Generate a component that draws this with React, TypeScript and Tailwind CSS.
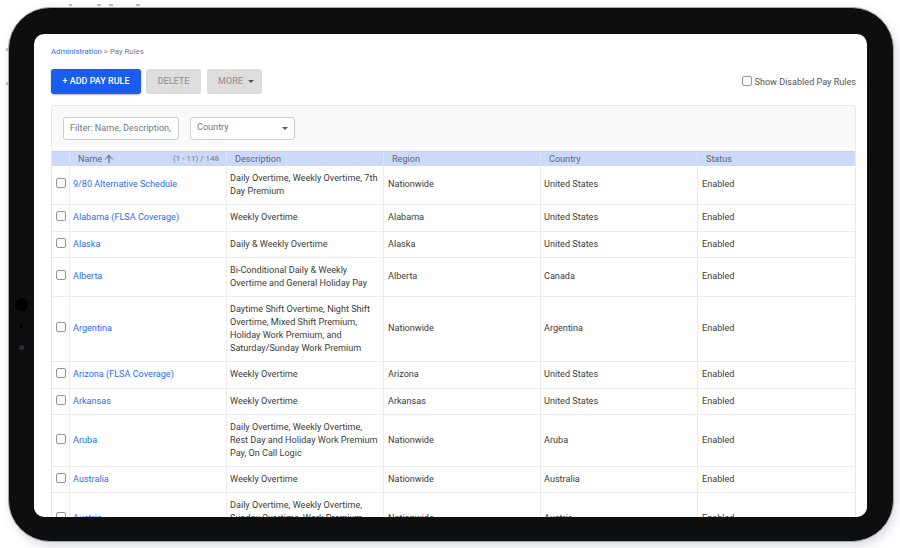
import { ArrowUp } from "lucide-react";

const rows = [
    { name: "9/80 Alternative Schedule", desc: ["Daily Overtime, Weekly Overtime, 7th", "Day Premium"], region: "Nationwide", country: "United States", h: "h-[39px]" },
    { name: "Alabama (FLSA Coverage)", desc: ["Weekly Overtime"], region: "Alabama", country: "United States", h: "h-[27px]" },
    { name: "Alaska", desc: ["Daily & Weekly Overtime"], region: "Alaska", country: "United States", h: "h-[26px]" },
    { name: "Alberta", desc: ["Bi-Conditional Daily & Weekly", "Overtime and General Holiday Pay"], region: "Alberta", country: "Canada", h: "h-[39px]" },
    { name: "Argentina", desc: ["Daytime Shift Overtime, Night Shift", "Overtime, Mixed Shift Premium,", "Holiday Work Premium, and", "Saturday/Sunday Work Premium"], region: "Nationwide", country: "Argentina", h: "h-[65px]" },
    { name: "Arizona (FLSA Coverage)", desc: ["Weekly Overtime"], region: "Arizona", country: "United States", h: "h-[27px]" },
    { name: "Arkansas", desc: ["Weekly Overtime"], region: "Arkansas", country: "United States", h: "h-[26px]" },
    { name: "Aruba", desc: ["Daily Overtime, Weekly Overtime,", "Rest Day and Holiday Work Premium", "Pay, On Call Logic"], region: "Nationwide", country: "Aruba", h: "h-[52px]" },
    { name: "Australia", desc: ["Weekly Overtime"], region: "Nationwide", country: "Australia", h: "h-[26px]" },
    { name: "Austria", desc: ["Daily Overtime, Weekly Overtime,", "Sunday Overtime, Work Premium,", "\u00a0"], region: "Nationwide", country: "Austria", h: "h-[52px]" },
];

const cols = "grid grid-cols-[18px_157px_157px_157px_157px_1fr]";

function Box({ className = "" }: { className?: string }) {
    return <span className={`block w-[10px] h-[10px] rounded-[2px] border border-[#949494] bg-white ${className}`} />;
}

function Caret() {
    return <span className="block w-0 h-0 border-x-[3.5px] border-x-transparent border-t-[3.5px] border-t-[#555]" />;
}

export default function App() {
    return (
        <div className="w-[900px] h-[548px] bg-white pt-[7px] pl-[8px] overflow-hidden font-['Roboto',sans-serif]">
            {/* Tablet frame */}
            <div className="relative w-[886px] h-[535px] rounded-[42px] bg-[#0e0e0e] border border-[#a8a8a8] shadow-[2px_4px_10px_rgba(120,140,160,0.3)] pl-[25px] pt-[26px]">
                {/* Hardware buttons */}
                <span className="absolute left-[60px] top-[-4px] w-[3px] h-[2px] bg-[#bbb]" />
                <span className="absolute left-[88px] top-[-4px] w-[4px] h-[2px] bg-[#bbb]" />
                <span className="absolute left-[100px] top-[-4px] w-[4px] h-[2px] bg-[#bbb]" />
                <span className="absolute left-[127px] top-[-4px] w-[4px] h-[2px] bg-[#bbb]" />
                <span className="absolute left-[-3px] top-[40px] w-[2px] h-[3px] bg-[#bbb]" />
                <span className="absolute left-[-3px] top-[74px] w-[2px] h-[3px] bg-[#bbb]" />

                {/* Camera and sensors */}
                <span className="absolute left-[6px] top-[290px] w-[13px] h-[13px] rounded-full bg-[#000]" />
                <span className="absolute left-[10px] top-[317px] w-[4px] h-[4px] rounded-full bg-[#000]" />
                <span className="absolute left-[10px] top-[337px] w-[5px] h-[5px] rounded-full bg-[#25303a]" />

                {/* Screen */}
                <div className="w-[833px] h-[483px] rounded-[10px] bg-white overflow-hidden pl-[17px] pr-[11px] pt-[13px]">
                    <div className="text-[7.8px] leading-[10px] text-[#777]">
                        <span className="text-[#2f6bf0]">Administration</span> &gt; Pay Rules
                    </div>

                    <div className="flex items-start mt-[12px] h-[25px]">
                        <button className="w-[90px] h-[25px] rounded-[3px] bg-[#1a5cf0] text-white text-[9px] font-medium shadow-[0_1px_2px_rgba(0,0,0,0.3)]">+ ADD PAY RULE</button>
                        <button className="ml-[5px] w-[55px] h-[25px] rounded-[3px] bg-[#dddddd] text-[#9a9a9a] text-[9px] font-medium">DELETE</button>
                        <button className="ml-[6px] w-[55px] h-[25px] rounded-[3px] bg-[#dddddd] text-[#9a9a9a] text-[9px] font-medium flex items-center justify-center gap-[5px] pl-[3px]">
                            MORE <Caret />
                        </button>
                        <label className="ml-auto flex items-center gap-[3px] text-[9.1px] text-[#555] mt-[7px]">
                            <Box className="mb-[3px]" />
                            Show Disabled Pay Rules
                        </label>
                    </div>

                    {/* Table card */}
                    <div className="mt-[11px] w-[805px] rounded-t-[3px] border border-[#e8e8e8] border-b-0 bg-[#f9f9f9]">
                        <div className="h-[45px] flex items-center pl-[11px] gap-[11px]">
                            <div className="w-[116px] h-[23px] rounded-[3px] border border-[#cfcfcf] bg-white px-[6px] text-[9.1px] leading-[20px] text-[#777] whitespace-nowrap overflow-hidden">
                                Filter: Name, Description,
                            </div>
                            <div className="w-[105px] h-[23px] rounded-[3px] border border-[#cfcfcf] bg-white px-[6px] pb-[1px] text-[9.1px] text-[#777] flex items-center justify-between">
                                Country
                                <Caret />
                            </div>
                        </div>

                        <div className={`${cols} h-[15px] bg-[#cbdafb] border-t border-[#c0d0f0] text-[9.1px] leading-[14px] text-[#5f6672]`}>
                            <div className="border-r border-[#dbe5fb]" />
                            <div className="border-r border-[#dbe5fb] pl-[8px] pr-[7px] flex items-center">
                                Name
                                <ArrowUp className="w-[12px] h-[12px] ml-[1px] text-[#555]" strokeWidth={2} />
                                <span className="ml-auto text-[8px] text-[#777]">(1 - 11) / 148</span>
                            </div>
                            <div className="border-r border-[#dbe5fb] pl-[8px]">Description</div>
                            <div className="border-r border-[#dbe5fb] pl-[8px]">Region</div>
                            <div className="border-r border-[#dbe5fb] pl-[8px]">Country</div>
                            <div className="pl-[8px]">Status</div>
                        </div>

                        <div className="bg-white text-[9.1px] leading-[13px] text-[#3c3c3c]">
                            {rows.map((r) => (
                                <div key={r.name} className={`${cols} ${r.h} border-b border-[#ececec]`}>
                                    <div className="border-r border-[#ececec] flex items-center justify-center pb-[4px]">
                                        <Box />
                                    </div>
                                    <div className="border-r border-[#ececec] pl-[3px] pb-[1px] flex items-center text-[#2f6bf0] whitespace-nowrap">{r.name}</div>
                                    <div className="border-r border-[#ececec] pl-[3px] pb-[1px] flex flex-col justify-center whitespace-nowrap">
                                        {r.desc.map((d) => (
                                            <span key={d}>{d}</span>
                                        ))}
                                    </div>
                                    <div className="border-r border-[#ececec] pl-[4px] pb-[1px] flex items-center">{r.region}</div>
                                    <div className="border-r border-[#ececec] pl-[3px] pb-[1px] flex items-center">{r.country}</div>
                                    <div className="pl-[4px] pb-[1px] flex items-center">Enabled</div>
                                </div>
                            ))}
                        </div>
                    </div>
                </div>
            </div>
        </div>
    );
}
